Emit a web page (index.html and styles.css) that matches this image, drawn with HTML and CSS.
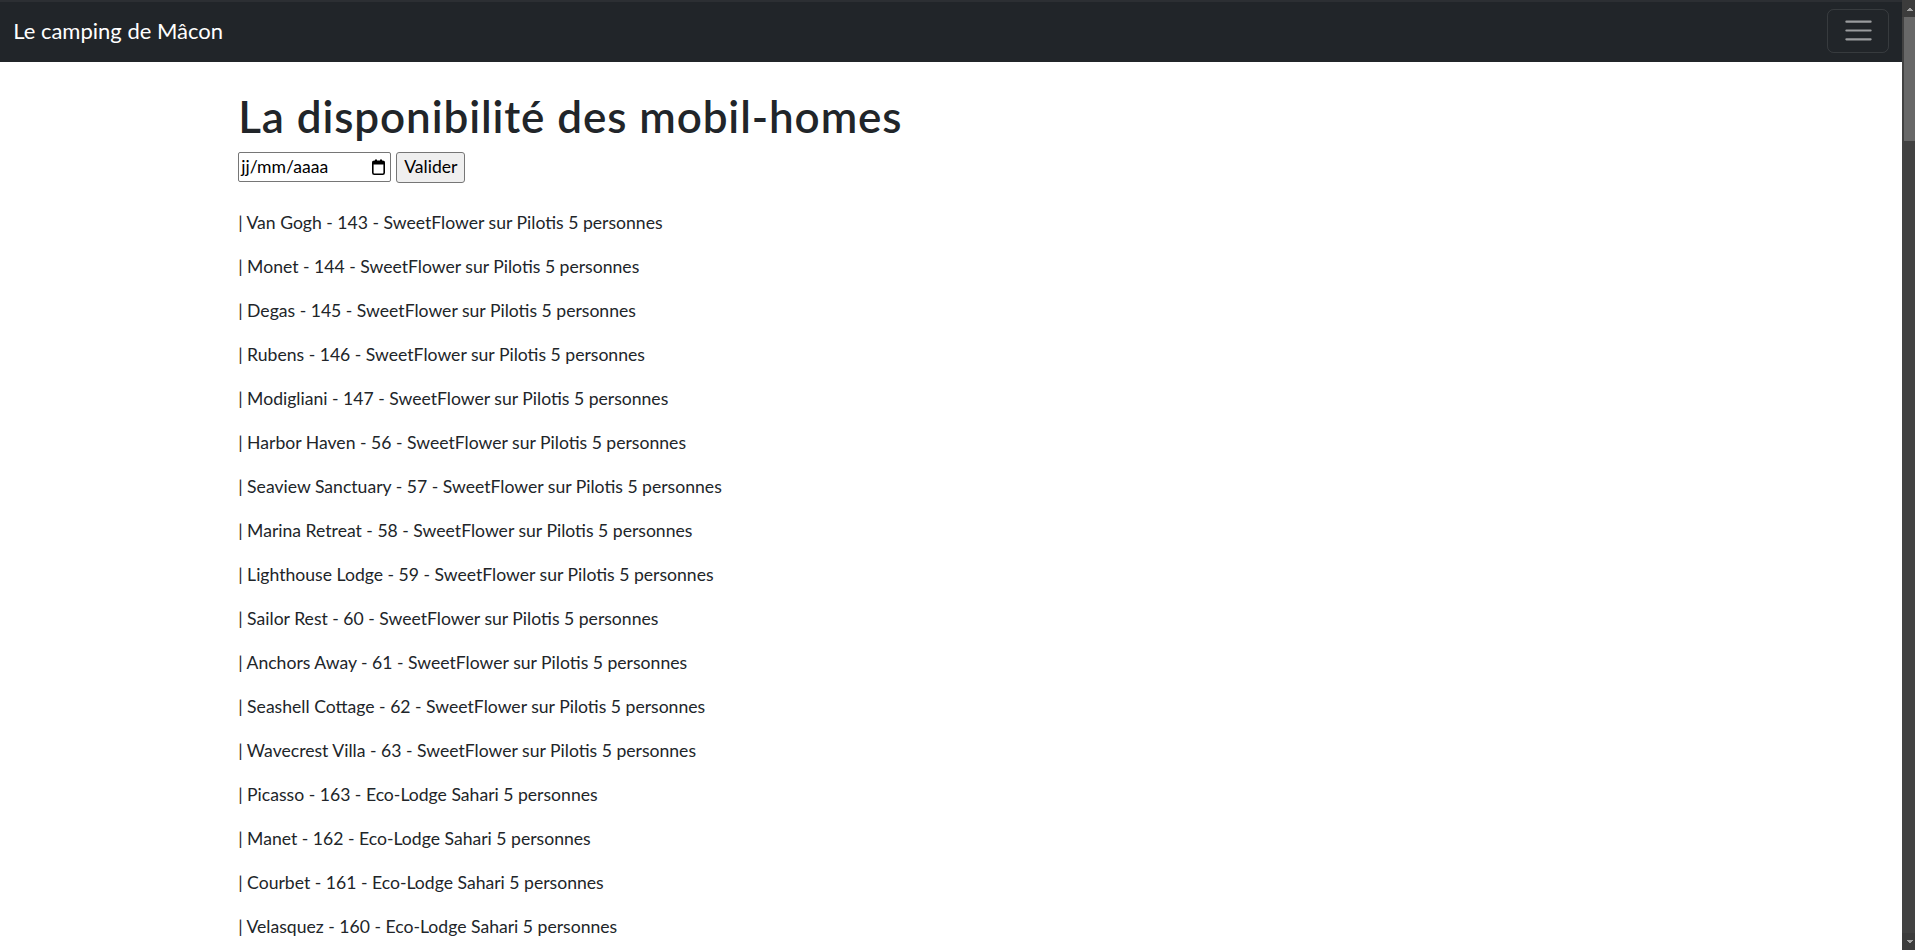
FILE: index.html
```html
<!DOCTYPE html>
<html lang="fr">
<head>
<meta charset="utf-8">
<title>Le camping de Mâcon</title>
<link rel="stylesheet" href="styles.css">
</head>
<body>
<div class="layout">
<div class="page">
<nav class="navbar">
  <div class="navbar-inner">
    <a class="brand" href="#">Le camping de Mâcon</a>
    <button class="toggler" type="button" aria-label="Menu">
      <svg class="toggler-icon" viewBox="0 0 30 30" width="33" height="33" aria-hidden="true">
        <path d="M4 7h22M4 15h22M4 23h22" stroke="rgba(255,255,255,0.55)" stroke-width="2" stroke-linecap="round" fill="none"/>
      </svg>
    </button>
  </div>
</nav>
<main class="container">
  <h1 class="title">La disponibilité des mobil-homes</h1>
  <form class="date-form">
    <div class="date-input">
      <span class="date-text">jj/mm/aaaa</span>
      <svg class="cal-icon" viewBox="0 0 13 16" width="13" height="16" aria-hidden="true">
        <rect x="3" y="0.5" width="2" height="3" fill="#000"/>
        <rect x="8" y="0.5" width="2" height="3" fill="#000"/>
        <rect x="0.8" y="2.3" width="11.4" height="12.9" rx="1.5" fill="none" stroke="#000" stroke-width="1.6"/>
        <rect x="0.5" y="2" width="12" height="3.5" rx="1" fill="#000"/>
      </svg>
    </div>
    <button class="btn-submit" type="button">Valider</button>
  </form>
  <div class="list">
    <p>| Van Gogh - 143 - SweetFlower sur Pilotis 5 personnes</p>
    <p>| Monet - 144 - SweetFlower sur Pilotis 5 personnes</p>
    <p>| Degas - 145 - SweetFlower sur Pilotis 5 personnes</p>
    <p>| Rubens - 146 - SweetFlower sur Pilotis 5 personnes</p>
    <p>| Modigliani - 147 - SweetFlower sur Pilotis 5 personnes</p>
    <p>| Harbor Haven - 56 - SweetFlower sur Pilotis 5 personnes</p>
    <p>| Seaview Sanctuary - 57 - SweetFlower sur Pilotis 5 personnes</p>
    <p>| Marina Retreat - 58 - SweetFlower sur Pilotis 5 personnes</p>
    <p>| Lighthouse Lodge - 59 - SweetFlower sur Pilotis 5 personnes</p>
    <p>| Sailor Rest - 60 - SweetFlower sur Pilotis 5 personnes</p>
    <p>| Anchors Away - 61 - SweetFlower sur Pilotis 5 personnes</p>
    <p>| Seashell Cottage - 62 - SweetFlower sur Pilotis 5 personnes</p>
    <p>| Wavecrest Villa - 63 - SweetFlower sur Pilotis 5 personnes</p>
    <p>| Picasso - 163 - Eco-Lodge Sahari 5 personnes</p>
    <p>| Manet - 162 - Eco-Lodge Sahari 5 personnes</p>
    <p>| Courbet - 161 - Eco-Lodge Sahari 5 personnes</p>
    <p>| Velasquez - 160 - Eco-Lodge Sahari 5 personnes</p>
    <p>| Renoir - 159 - Eco-Lodge Sahari 5 personnes</p>
    <p>| Cézanne - 158 - Eco-Lodge Sahari 5 personnes</p>
    <p>| Matisse - 157 - Eco-Lodge Sahari 5 personnes</p>
    <p>| Gauguin - 156 - Eco-Lodge Sahari 5 personnes</p>
    <p>| Vermeer - 155 - Eco-Lodge Sahari 5 personnes</p>
    <p>| Rembrandt - 154 - Eco-Lodge Sahari 5 personnes</p>
    <p>| Goya - 153 - Eco-Lodge Sahari 5 personnes</p>
    <p>| Dali - 152 - Eco-Lodge Sahari 5 personnes</p>
    <p>| Klimt - 151 - Eco-Lodge Sahari 5 personnes</p>
    <p>| Chagall - 150 - Eco-Lodge Sahari 5 personnes</p>
  </div>
</main>
</div>
<div class="rail" aria-hidden="true">
  <span class="rail-btn rail-up"></span>
  <span class="rail-thumb"></span>
  <span class="rail-track"></span>
  <span class="rail-btn rail-down"></span>
</div>
</div>
</body>
</html>
```

FILE: styles.css
```css
* {
  box-sizing: border-box;
}

html,
body {
  height: 100%;
}

body {
  margin: 0;
  font-family: "Lato", "Noto Sans", sans-serif;
  font-size: 17.6px;
  line-height: 26.4px;
  color: #212529;
  background: #fff;
  overflow: hidden;
}

.layout {
  display: flex;
  height: 100vh;
}

.page {
  flex: 1;
  min-width: 0;
  height: 100%;
  overflow-y: auto;
}

.page::-webkit-scrollbar {
  width: 0;
}

/* scrollbar rail */
.rail {
  flex: none;
  width: 13px;
  display: flex;
  flex-direction: column;
  background: #424242;
}

.rail-btn {
  flex: none;
  height: 17px;
  background-color: #3c3c3c;
  background-repeat: no-repeat;
  background-position: 4px center;
  background-size: 8px 4px;
}

.rail-up {
  background-image: conic-gradient(from 139deg at 50% 0, #a3a3a3 0 82deg, transparent 0);
}

.rail-down {
  background-image: conic-gradient(from -41deg at 50% 100%, #a3a3a3 0 82deg, transparent 0);
}

.rail-thumb {
  flex: none;
  height: 124px;
  margin-left: 2px;
  background: #686868;
}

.rail-track {
  flex: 1;
}

.navbar {
  background: #212529;
  box-shadow: inset 0 2px 0 #2c2f33;
  padding: 8.8px 13.2px;
}

.navbar-inner {
  display: flex;
  align-items: center;
  justify-content: space-between;
}

.brand {
  color: #fff;
  text-decoration: none;
  font-size: 22px;
  line-height: 33px;
  padding: 5.5px 0;
}

.toggler {
  display: flex;
  align-items: center;
  justify-content: center;
  width: 61.6px;
  height: 44px;
  padding: 4.4px 13.2px;
  background: transparent;
  border: 1.1px solid rgba(255, 255, 255, 0.1);
  border-radius: 6.6px;
}

.toggler-icon {
  display: block;
  flex: none;
}

.container {
  width: 1452px;
  margin: 0 auto;
  padding: 0 13.2px;
}

.title {
  margin: 28.5px 0 8.8px;
  font-size: 44px;
  font-weight: 600;
  line-height: 52.8px;
  letter-spacing: 0.9px;
}

.date-form {
  display: flex;
  align-items: center;
  gap: 5px;
  margin: 0 0 27.8px;
}

.date-input {
  display: flex;
  align-items: center;
  justify-content: space-between;
  width: 153px;
  height: 30px;
  padding: 0 5px 0 2px;
  border: 1px solid #767676;
  border-radius: 2px;
  background: #fff;
  color: #000;
}

.date-text {
  font-size: 17.6px;
  line-height: 26px;
}

.cal-icon {
  display: block;
}

.btn-submit {
  height: 31px;
  padding: 0 7px;
  font-family: inherit;
  font-size: 17.6px;
  line-height: 26px;
  color: #000;
  background: #efefef;
  border: 1px solid #767676;
  border-radius: 3px;
}

.list p {
  margin: 0 0 17.6px;
}
```
